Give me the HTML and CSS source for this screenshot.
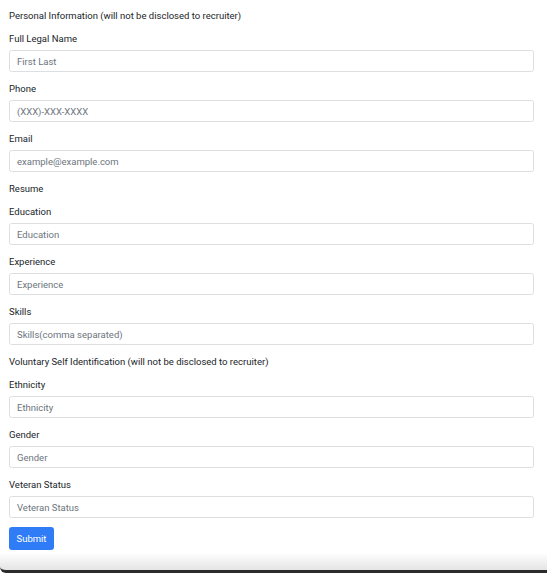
FILE: index.html
```html
<!DOCTYPE html>
<html lang="en">

<head>
  <meta charset="UTF-8">
  <meta name="viewport" content="width=device-width, initial-scale=1.0">
  <title>Application</title>
  <link rel="stylesheet" href="styles.css">
</head>

<body>
  <form class="apply-form">
    <div class="section-title">Personal Information (will not be disclosed to recruiter)</div>

    <div class="form-group">
      <label for="name">Full Legal Name</label>
      <input type="text" id="name" placeholder="First Last" />
    </div>
    <div class="form-group">
      <label for="phone">Phone</label>
      <input type="text" id="phone" placeholder="(XXX)-XXX-XXXX" />
    </div>
    <div class="form-group">
      <label for="email">Email</label>
      <input type="text" id="email" placeholder="example@example.com" />
    </div>

    <div class="section-title">Resume</div>

    <div class="form-group">
      <label for="education">Education</label>
      <input type="text" id="education" placeholder="Education" />
    </div>
    <div class="form-group">
      <label for="experience">Experience</label>
      <input type="text" id="experience" placeholder="Experience" />
    </div>
    <div class="form-group">
      <label for="skills">Skills</label>
      <input type="text" id="skills" placeholder="Skills(comma separated)" />
    </div>

    <div class="section-title">Voluntary Self Identification (will not be disclosed to recruiter)</div>

    <div class="form-group">
      <label for="ethnicity">Ethnicity</label>
      <input type="text" id="ethnicity" placeholder="Ethnicity" />
    </div>
    <div class="form-group">
      <label for="gender">Gender</label>
      <input type="text" id="gender" placeholder="Gender" />
    </div>
    <div class="form-group">
      <label for="veteran">Veteran Status</label>
      <input type="text" id="veteran" placeholder="Veteran Status" />
    </div>

    <button type="submit" class="btn-submit">Submit</button>
  </form>

  <div class="window-edge"></div>
</body>

</html>
```

FILE: styles.css
```css
body {
  margin: 0;
  background: #fff;
  color: #212529;
  font-family: Roboto, "Liberation Sans", sans-serif;
  font-size: 9.5px;
  line-height: 14px;
}

.apply-form {
  padding: 8px 13px 0 9px;
}

.section-title {
  padding-top: 1px;
  margin-bottom: 8px;
}

.form-group {
  margin-bottom: 9px;
}

label {
  display: block;
  padding-top: 1px;
  margin-bottom: 4px;
}

input {
  display: block;
  box-sizing: border-box;
  width: 100%;
  height: 22px;
  padding: 0 7px;
  border: 1px solid #dcdfe2;
  border-radius: 2.5px;
  font-family: inherit;
  font-size: 9.5px;
  color: #495057;
  background: #fff;
}

input::placeholder {
  color: #6c757d;
}

.btn-submit {
  height: 23px;
  padding: 0 7.5px;
  border: none;
  border-radius: 3px;
  background: #2f7cf6;
  color: white;
  font-family: inherit;
  font-size: 9.5px;
  cursor: pointer;
}

.window-edge {
  height: 17px;
  margin-top: 3px;
  background: linear-gradient(to bottom, #fff, #e4e4e4);
  border-bottom: 3px solid #2b2b2b;
  border-bottom-left-radius: 6px;
}
```
